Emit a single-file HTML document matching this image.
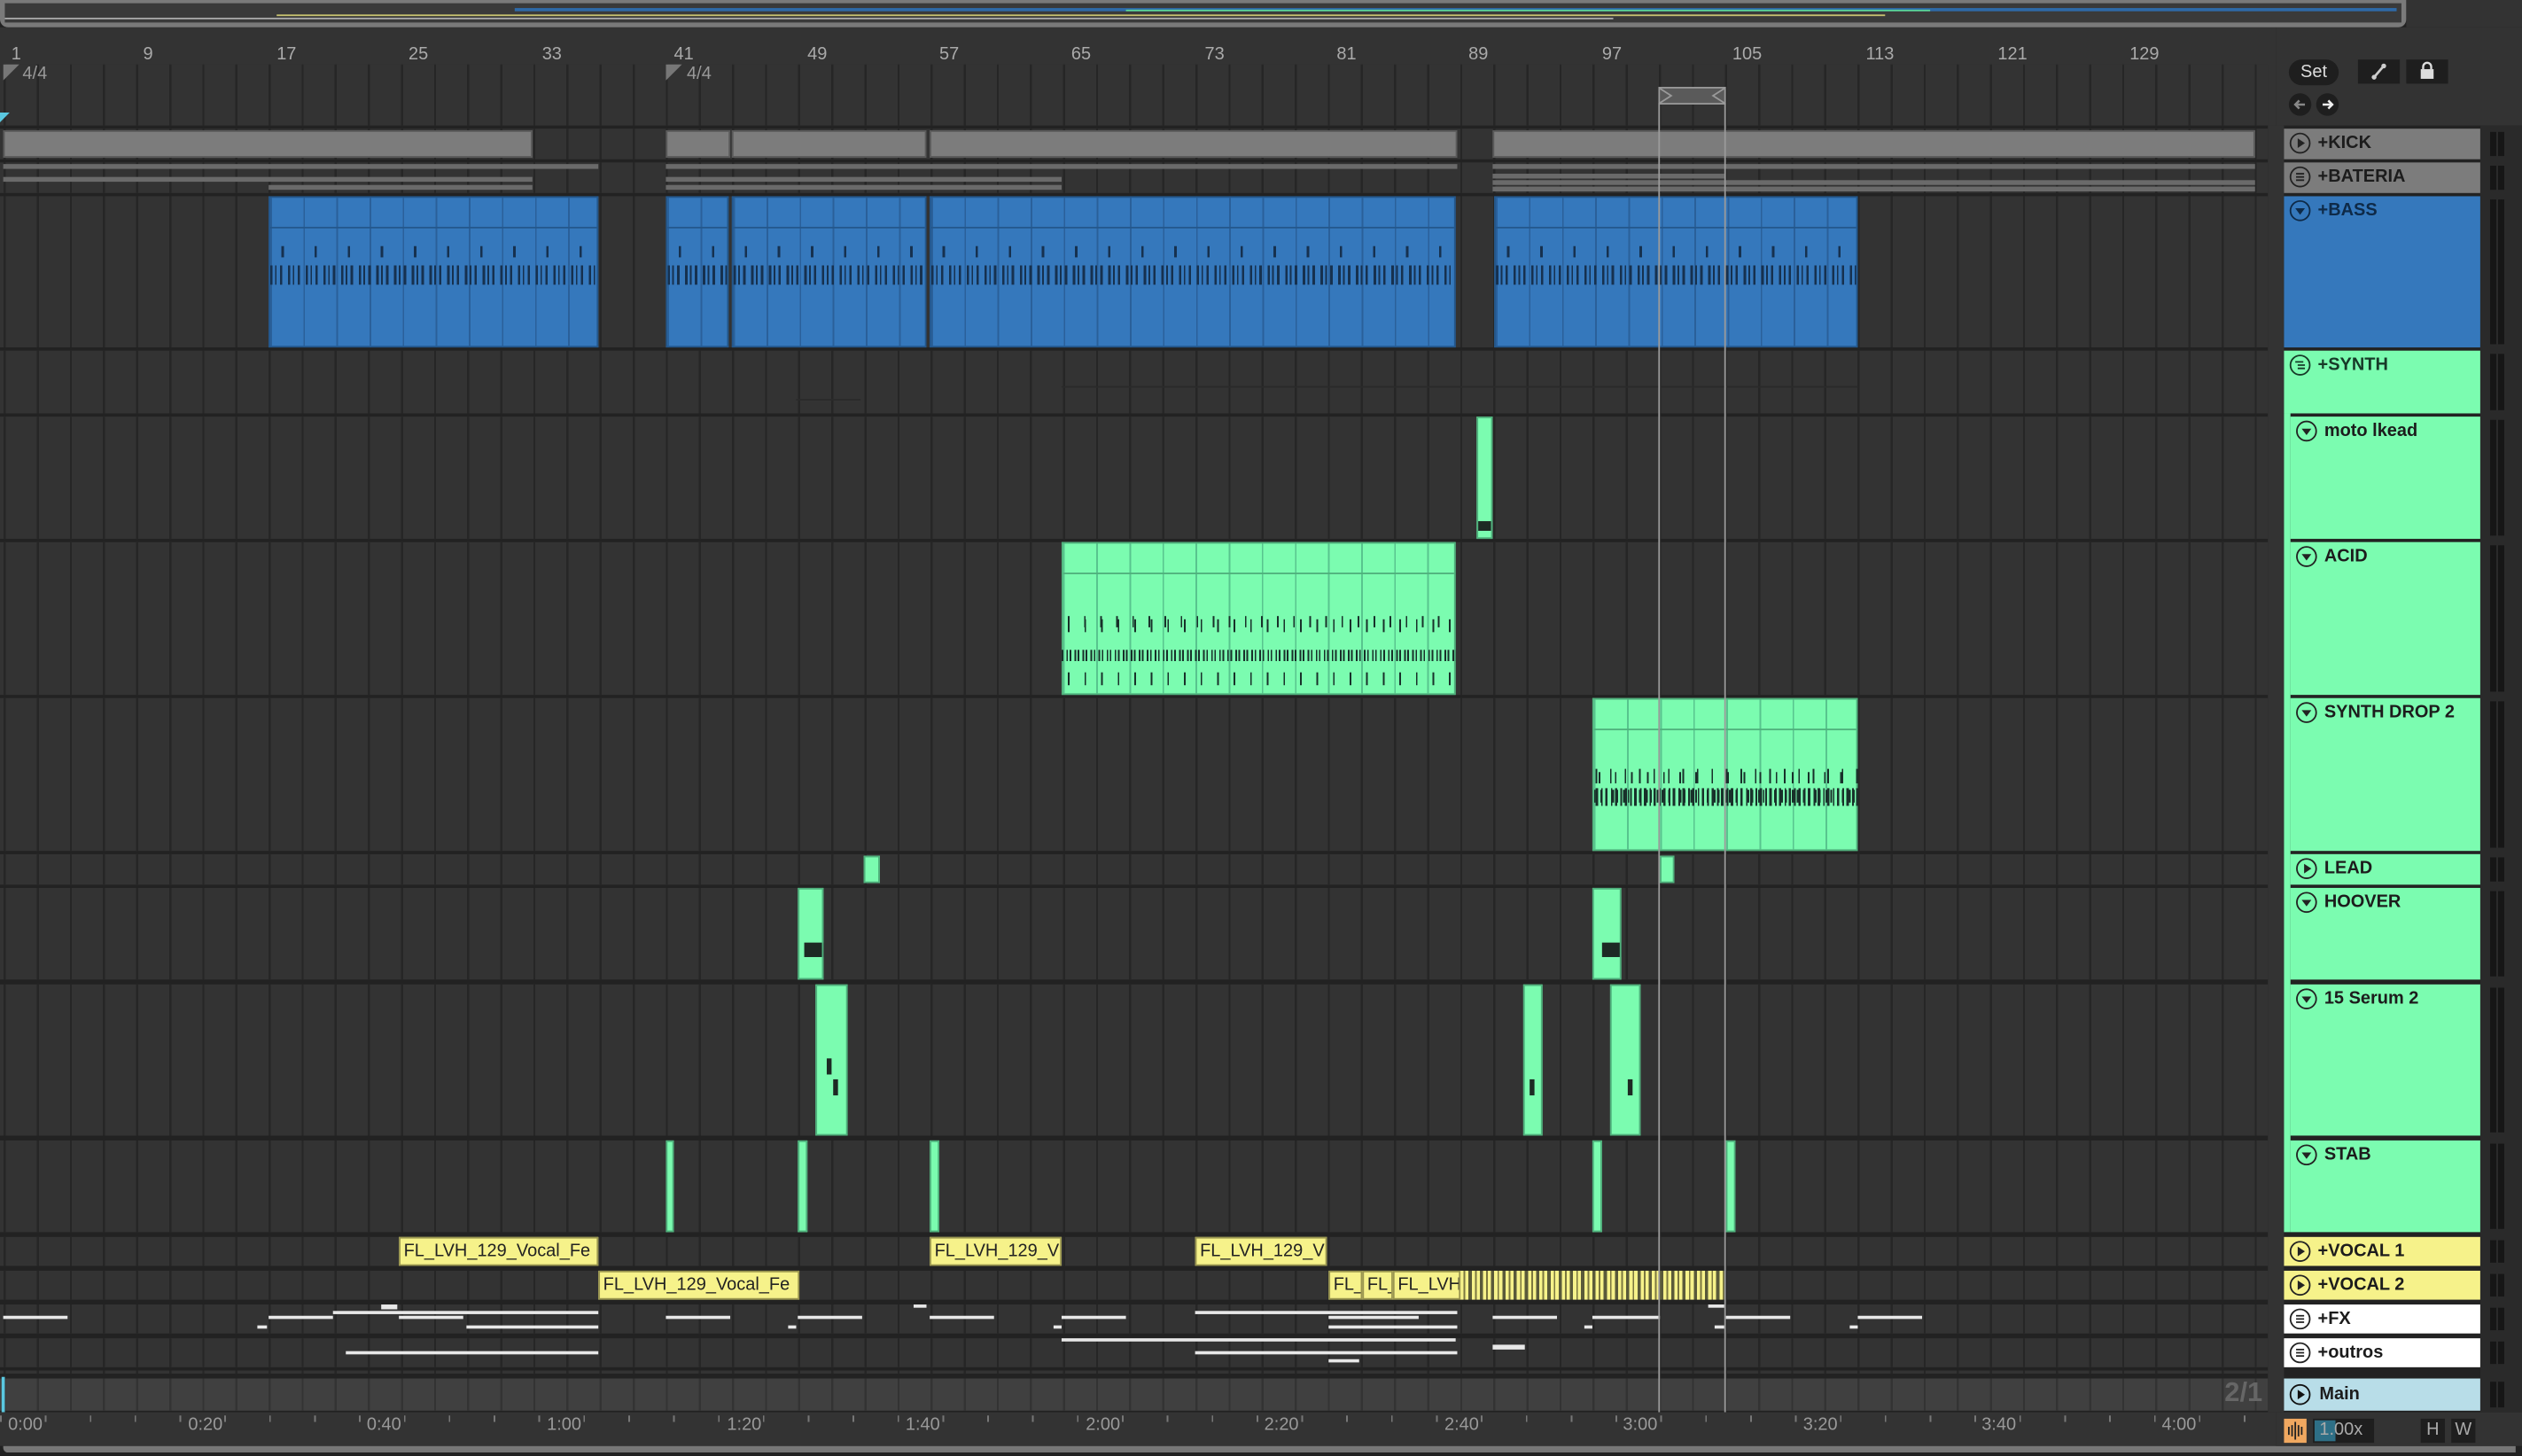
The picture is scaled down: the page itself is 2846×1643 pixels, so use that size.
<!DOCTYPE html>
<html><head><meta charset="utf-8">
<style>
html,body{margin:0;padding:0;background:#1f1f1f;width:2846px;height:1642px;overflow:hidden}
#r{position:absolute;left:0;top:0;width:1568px;height:905px;transform:scale(1.8151);transform-origin:0 0;background:#222;font-family:"Liberation Sans",sans-serif;overflow:hidden}
.a{position:absolute}
.row{position:absolute;left:0;width:1410px;background-color:#333;background-image:repeating-linear-gradient(90deg,transparent 0 2.3px,#262626 2.3px 3.6px,transparent 3.6px 20.58px)}
.hd{position:absolute;left:1420px;width:122px;font-size:11px;font-weight:bold;color:#1c1c1c;box-sizing:border-box;padding-left:21px;line-height:18px}
.hd.ind{left:1424px;width:118px}
.hd svg{position:absolute;left:3px;top:2px}
.mt{position:absolute;left:1548px;width:10px;background:repeating-linear-gradient(90deg,#161616 0 4px,transparent 4px 5px)}
.c{position:absolute;box-sizing:border-box}
.bl{background:#3578bc;border:1px solid #23578c}
.gr{background:#7bfcb0;border:1px solid #4fb07c}
.gy{background:#7c7c7c;border:1px solid #5a5a5a}
.ye{background:#f6f28a;border:1px solid #9a9650;font-size:11px;color:#222;line-height:16px;padding-left:2px;overflow:hidden;white-space:nowrap}
.hl{position:absolute;left:0;right:0;height:1px}
.num{position:absolute;top:28px;font-size:11px;color:#aaa}
.tm{position:absolute;top:880px;font-size:11px;color:#999}
.w{position:absolute;height:2px;background:#e8e8e8}
</style></head><body><div id="r">
<!-- overview -->
<div class="a" style="left:0;top:0;width:1496px;height:17px;background:#7a7a7a;border-radius:0 0 5px 5px"></div>
<div class="a" style="left:3px;top:2px;width:1490px;height:12px;background:#3a3a3a"></div>
<div class="a" style="left:320px;top:5px;width:1170px;height:2px;background:#2e6aa8"></div>
<div class="a" style="left:172px;top:9px;width:1000px;height:1px;background:#c8c270"></div>
<div class="a" style="left:700px;top:6px;width:500px;height:1px;background:#5bd898"></div>
<div class="a" style="left:3px;top:11px;width:1000px;height:1px;background:#aaa"></div>
<div class="a" style="left:1496px;top:0;width:72px;height:17px;background:#333"></div>
<!-- ruler -->
<div class="a" style="left:0;top:17px;width:1415px;height:61px;background:#333"></div>
<div class="row" style="top:40px;height:38px;background-color:#333"></div>
<div class="a" style="left:0;top:40px;width:1410px;height:38px;background:#333;opacity:.0"></div>
<div class="num" style="left:7px">1</div><div class="num" style="left:89px">9</div><div class="num" style="left:172px">17</div><div class="num" style="left:254px">25</div><div class="num" style="left:337px">33</div><div class="num" style="left:419px">41</div><div class="num" style="left:502px">49</div><div class="num" style="left:584px">57</div><div class="num" style="left:666px">65</div><div class="num" style="left:749px">73</div><div class="num" style="left:831px">81</div><div class="num" style="left:913px">89</div><div class="num" style="left:996px">97</div><div class="num" style="left:1077px">105</div><div class="num" style="left:1160px">113</div><div class="num" style="left:1242px">121</div><div class="num" style="left:1324px">129</div>
<div class="a" style="left:14px;top:40px;font-size:11px;color:#999">4/4</div>
<div class="a" style="left:427px;top:40px;font-size:11px;color:#999">4/4</div>
<svg class="a" style="left:2px;top:40px" width="12" height="12"><path d="M0 0H10L0 10Z" fill="#777"/></svg>
<svg class="a" style="left:414px;top:40px" width="12" height="12"><path d="M0 0H10L0 10Z" fill="#777"/></svg>
<svg class="a" style="left:1031px;top:54px" width="43" height="11"><rect x="0.5" y="0.5" width="41" height="10" fill="#5a5a5a" stroke="#999"/><path d="M1 1L8 5.5L1 10M41 1L34 5.5L41 10" fill="none" stroke="#999"/></svg>
<!-- right top panel -->
<div class="a" style="left:1415px;top:17px;width:153px;height:61px;background:#333"></div>
<div class="a" style="left:1423px;top:37px;width:31px;height:16px;border-radius:8px;background:#1e1e1e;color:#ddd;font-size:11px;text-align:center;line-height:16px">Set</div>
<div class="a" style="left:1466px;top:37px;width:26px;height:15px;background:#1e1e1e"><svg width="26" height="15"><path d="M10 11L16 4" stroke="#ccc" stroke-width="1.5"/><circle cx="10" cy="11" r="1.5" fill="#ccc"/><circle cx="16" cy="4" r="1.5" fill="#ccc"/></svg></div>
<div class="a" style="left:1496px;top:37px;width:26px;height:15px;background:#1e1e1e"><svg width="26" height="15"><rect x="9" y="6" width="8" height="6" fill="#ddd"/><path d="M10.5 6V4.5a2.5 2.5 0 0 1 5 0V6" fill="none" stroke="#ddd" stroke-width="1.3"/></svg></div>
<svg class="a" style="left:1422px;top:57px" width="35" height="16"><circle cx="8" cy="8" r="7" fill="#1e1e1e"/><circle cx="25" cy="8" r="7" fill="#1e1e1e"/><path d="M11 8H5M7.5 5.5L5 8L7.5 10.5" stroke="#888" stroke-width="1.4" fill="none"/><path d="M22 8H28M25.5 5.5L28 8L25.5 10.5" stroke="#eee" stroke-width="1.4" fill="none"/></svg>
<!-- track rows -->
<div class="row" style="top:80px;height:19px"></div>
<div class="row" style="top:101px;height:19px"></div>
<div class="row" style="top:122px;height:94px"></div>
<div class="row" style="top:218px;height:39px"></div>
<div class="row" style="top:259px;height:76px"></div>
<div class="row" style="top:337px;height:95px"></div>
<div class="row" style="top:434px;height:95px"></div>
<div class="row" style="top:531px;height:19px"></div>
<div class="row" style="top:552px;height:57px"></div>
<div class="row" style="top:612px;height:94px"></div>
<div class="row" style="top:709px;height:57px"></div>
<div class="row" style="top:769px;height:18px"></div>
<div class="row" style="top:790px;height:18px"></div>
<div class="row" style="top:811px;height:18px"></div>
<div class="row" style="top:832px;height:18px"></div>
<div class="row" style="top:852px;height:2px"></div>
<div class="row" style="top:857px;height:20px;background-color:#404040;background-image:repeating-linear-gradient(90deg,transparent 0 2.3px,#333 2.3px 3.6px,transparent 3.6px 20.58px)"></div>
<div class="a" style="left:1383px;top:856px;font-size:17px;font-weight:bold;color:#666">2/1</div>
<!-- kick clips -->
<div class="c gy" style="left:2px;top:81px;width:329px;height:17px"></div>
<div class="c gy" style="left:414px;top:81px;width:40px;height:17px"></div>
<div class="c gy" style="left:455px;top:81px;width:121px;height:17px"></div>
<div class="c gy" style="left:578px;top:81px;width:328px;height:17px"></div>
<div class="c gy" style="left:928px;top:81px;width:474px;height:17px"></div>
<!-- bateria lines -->
<div class="a" style="left:2px;top:102px;width:370px;height:3px;background:#6a6a6a"></div>
<div class="a" style="left:2px;top:110px;width:329px;height:3px;background:#6a6a6a"></div>
<div class="a" style="left:167px;top:115px;width:164px;height:3px;background:#6a6a6a"></div>
<div class="a" style="left:414px;top:102px;width:492px;height:3px;background:#6a6a6a"></div>
<div class="a" style="left:414px;top:110px;width:246px;height:3px;background:#6a6a6a"></div>
<div class="a" style="left:414px;top:115px;width:246px;height:3px;background:#6a6a6a"></div>
<div class="a" style="left:928px;top:102px;width:474px;height:3px;background:#6a6a6a"></div>
<div class="a" style="left:928px;top:108px;width:144px;height:3px;background:#6a6a6a"></div>
<div class="a" style="left:928px;top:112px;width:474px;height:3px;background:#6a6a6a"></div>
<div class="a" style="left:928px;top:116px;width:474px;height:3px;background:#6a6a6a"></div>
<!-- bass clips -->
<style>.bn{background-image:linear-gradient(#23578c,#23578c),repeating-linear-gradient(90deg,#16314f 0 1.5px,transparent 1.5px 3px,#16314f 3px 4px,transparent 4px 6px,#16314f 6px 7.5px,transparent 7.5px 11px),repeating-linear-gradient(90deg,transparent 0 7px,#16314f 7px 8.5px,transparent 8.5px 20.58px),repeating-linear-gradient(90deg,#2a609a 0 1px,transparent 1px 20.58px);background-size:100% 1px,100% 12px,100% 7px,100% 100%;background-position:0 18px,0 42px,0 30px,0 0;background-repeat:no-repeat}
.gn{background-image:linear-gradient(#4fb07c,#4fb07c),repeating-linear-gradient(90deg,#18302a 0 1px,transparent 1px 4px,#18302a 4px 5.5px,transparent 5.5px 7px),repeating-linear-gradient(90deg,transparent 0 3px,#18302a 3px 4px,transparent 4px 10px),repeating-linear-gradient(90deg,#58c48e 0 1px,transparent 1px 20.58px);background-size:100% 1px,100% 8px,100% 7px,100% 100%;background-repeat:no-repeat}</style>
<div class="c bl bn" style="left:167px;top:122px;width:205px;height:94px"></div>
<div class="c bl bn" style="left:414px;top:122px;width:39px;height:94px"></div>
<div class="c bl bn" style="left:455px;top:122px;width:121px;height:94px"></div>
<div class="c bl bn" style="left:578px;top:122px;width:327px;height:94px"></div>
<div class="c bl bn" style="left:929px;top:122px;width:226px;height:94px"></div>
<!-- synth faint lines -->
<div class="a" style="left:660px;top:240px;width:495px;height:1px;background:#2a2a2a"></div>
<div class="a" style="left:495px;top:248px;width:40px;height:1px;background:#2a2a2a"></div>
<!-- moto -->
<div class="c gr" style="left:918px;top:259px;width:10px;height:76px;background-image:linear-gradient(#1d2a24,#1d2a24);background-size:100% 6px;background-position:0 64px;background-repeat:no-repeat"></div>
<!-- acid -->
<div class="c gr gn" style="left:660px;top:337px;width:245px;height:95px;background-position:0 18px,0 404px,0 45px,0 0"></div>
<div class="a" style="left:660px;top:404px;width:245px;height:7px;background:repeating-linear-gradient(90deg,#18302a 0 1px,transparent 1px 3px,#18302a 3px 4px,transparent 4px 5px)"></div>
<div class="a" style="left:660px;top:385px;width:245px;height:8px;background:repeating-linear-gradient(90deg,transparent 0 4px,#18302a 4px 5px,transparent 5px 10.3px)"></div>
<div class="a" style="left:660px;top:418px;width:245px;height:8px;background:repeating-linear-gradient(90deg,transparent 0 4px,#18302a 4px 5px,transparent 5px 10.3px)"></div>
<!-- synth drop 2 -->
<div class="c gr gn" style="left:990px;top:434px;width:165px;height:95px;background-position:0 18px,0 56px,0 45px,0 0"></div>
<div class="a" style="left:992px;top:490px;width:163px;height:11px;background:repeating-linear-gradient(90deg,#18302a 0 1.5px,transparent 1.5px 3.5px,#18302a 3.5px 4.5px,transparent 4.5px 6px)"></div>
<div class="a" style="left:992px;top:478px;width:163px;height:9px;background:repeating-linear-gradient(90deg,#18302a 0 1px,transparent 1px 9px)"></div>
<!-- lead -->
<div class="c gr" style="left:537px;top:532px;width:10px;height:17px"></div>
<div class="c gr" style="left:1032px;top:532px;width:9px;height:17px"></div>
<!-- hoover -->
<div class="c gr" style="left:496px;top:552px;width:16px;height:57px;background-image:linear-gradient(#1d2a24,#1d2a24);background-size:12px 9px;background-position:3px 33px;background-repeat:no-repeat"></div>
<div class="c gr" style="left:990px;top:552px;width:18px;height:57px;background-image:linear-gradient(#1d2a24,#1d2a24);background-size:12px 9px;background-position:5px 33px;background-repeat:no-repeat"></div>
<!-- serum -->
<div class="c gr" style="left:507px;top:612px;width:20px;height:94px;background-image:linear-gradient(#1d2a24,#1d2a24),linear-gradient(#1d2a24,#1d2a24);background-size:3px 10px,3px 10px;background-position:6px 45px,10px 58px;background-repeat:no-repeat"></div>
<div class="c gr" style="left:947px;top:612px;width:12px;height:94px;background-image:linear-gradient(#1d2a24,#1d2a24);background-size:3px 10px;background-position:3px 58px;background-repeat:no-repeat"></div>
<div class="c gr" style="left:1001px;top:612px;width:19px;height:94px;background-image:linear-gradient(#1d2a24,#1d2a24);background-size:3px 10px;background-position:10px 58px;background-repeat:no-repeat"></div>
<!-- stab -->
<div class="c gr" style="left:414px;top:709px;width:5px;height:57px"></div>
<div class="c gr" style="left:496px;top:709px;width:6px;height:57px"></div>
<div class="c gr" style="left:578px;top:709px;width:6px;height:57px"></div>
<div class="c gr" style="left:990px;top:709px;width:6px;height:57px"></div>
<div class="c gr" style="left:1073px;top:709px;width:6px;height:57px"></div>
<!-- vocals -->
<div class="c ye" style="left:248px;top:769px;width:124px;height:18px">FL_LVH_129_Vocal_Fe</div>
<div class="c ye" style="left:578px;top:769px;width:82px;height:18px">FL_LVH_129_V</div>
<div class="c ye" style="left:743px;top:769px;width:82px;height:18px">FL_LVH_129_V</div>
<div class="c ye" style="left:372px;top:790px;width:125px;height:18px">FL_LVH_129_Vocal_Fe</div>
<div class="c ye" style="left:826px;top:790px;width:21px;height:18px">FL_</div>
<div class="c ye" style="left:847px;top:790px;width:19px;height:18px">FL_</div>
<div class="c ye" style="left:866px;top:790px;width:42px;height:18px">FL_LVH</div>
<div class="a" style="left:908px;top:790px;width:164px;height:18px;background:repeating-linear-gradient(90deg,#f6f28a 0 2px,#7a7640 2px 3px,#f6f28a 3px 5px,#5a5a3a 5px 7px)"></div>
<!-- fx / outros white lines -->
<div class="w" style="left:2px;top:818px;width:40px"></div>
<div class="w" style="left:167px;top:818px;width:40px"></div>
<div class="w" style="left:207px;top:815px;width:165px"></div>
<div class="w" style="left:237px;top:811px;width:10px;height:3px"></div>
<div class="w" style="left:248px;top:818px;width:40px"></div>
<div class="w" style="left:290px;top:824px;width:82px"></div>
<div class="w" style="left:160px;top:824px;width:6px"></div>
<div class="w" style="left:414px;top:818px;width:40px"></div>
<div class="w" style="left:496px;top:818px;width:40px"></div>
<div class="w" style="left:490px;top:824px;width:5px"></div>
<div class="w" style="left:578px;top:818px;width:40px"></div>
<div class="w" style="left:568px;top:811px;width:8px"></div>
<div class="w" style="left:743px;top:815px;width:163px"></div>
<div class="w" style="left:826px;top:818px;width:56px"></div>
<div class="w" style="left:826px;top:824px;width:80px"></div>
<div class="w" style="left:660px;top:818px;width:40px"></div>
<div class="w" style="left:655px;top:824px;width:5px"></div>
<div class="w" style="left:928px;top:818px;width:40px"></div>
<div class="w" style="left:990px;top:818px;width:42px"></div>
<div class="w" style="left:985px;top:824px;width:5px"></div>
<div class="w" style="left:1062px;top:811px;width:10px"></div>
<div class="w" style="left:1066px;top:824px;width:6px"></div>
<div class="w" style="left:1073px;top:818px;width:40px"></div>
<div class="w" style="left:1155px;top:818px;width:40px"></div>
<div class="w" style="left:1150px;top:824px;width:5px"></div>
<div class="w" style="left:660px;top:832px;width:245px"></div>
<div class="w" style="left:215px;top:840px;width:157px"></div>
<div class="w" style="left:743px;top:840px;width:163px"></div>
<div class="w" style="left:826px;top:845px;width:19px"></div>
<div class="w" style="left:928px;top:836px;width:20px;height:3px"></div>
<!-- loop/playhead lines -->
<div class="a" style="left:1031px;top:64px;width:1px;height:814px;background:#9a9a9a"></div>
<div class="a" style="left:1072px;top:64px;width:1px;height:814px;background:#9a9a9a"></div>
<div class="a" style="left:1px;top:856px;width:2px;height:22px;background:#5ac8e0"></div>
<svg class="a" style="left:0;top:70px" width="8" height="8"><path d="M0 0H6L0 6Z" fill="#5ac8e0"/></svg>
<!-- time ruler -->
<div class="a" style="left:0;top:878px;width:1415px;height:21px;background:#333"></div>
<div class="a" style="left:0;top:880px;width:1400px;height:4px;background:repeating-linear-gradient(90deg,#777 0 1px,transparent 1px 27.9px)"></div>
<div class="tm" style="left:5px">0:00</div><div class="tm" style="left:117px">0:20</div><div class="tm" style="left:228px">0:40</div><div class="tm" style="left:340px">1:00</div><div class="tm" style="left:452px">1:20</div><div class="tm" style="left:563px">1:40</div><div class="tm" style="left:675px">2:00</div><div class="tm" style="left:786px">2:20</div><div class="tm" style="left:898px">2:40</div><div class="tm" style="left:1009px">3:00</div><div class="tm" style="left:1121px">3:20</div><div class="tm" style="left:1232px">3:40</div><div class="tm" style="left:1344px">4:00</div>
<div class="a" style="left:0;top:899px;width:1568px;height:6px;background:#222"></div>
<div class="a" style="left:2px;top:899px;width:1562px;height:4px;background:#777;border-radius:0 0 0 3px"></div>
<!-- right side panel bg -->
<div class="a" style="left:1415px;top:878px;width:153px;height:21px;background:#333"></div>
<div class="a" style="left:1420px;top:882px;width:14px;height:15px;background:#f0a860"><svg width="14" height="15"><path d="M3 5V10M5 4V11M7 2V13M9 4V11M11 5V10" stroke="#222" stroke-width="1"/></svg></div>
<div class="a" style="left:1438px;top:882px;width:38px;height:15px;background:#1e1e1e;color:#aaa;font-size:11px;line-height:15px"><div class="a" style="left:1px;top:1px;width:13px;height:13px;background:#2e6f86"></div><span class="a" style="left:4px">1.00x</span></div>
<div class="a" style="left:1505px;top:882px;width:15px;height:15px;background:#1e1e1e;color:#aaa;font-size:11px;line-height:15px;text-align:center">H</div>
<div class="a" style="left:1524px;top:882px;width:15px;height:15px;background:#1e1e1e;color:#aaa;font-size:11px;line-height:15px;text-align:center">W</div>
<!-- headers -->
<div class="a" style="left:1410px;top:78px;width:10px;height:800px;background:#333"></div>
<div class="a" style="left:1542px;top:78px;width:26px;height:800px;background:#2a2a2a"></div>
<div class="hd" style="top:80px;height:19px;background:#7c7c7c"><svg width="14" height="14"><circle cx="7" cy="7" r="6" fill="none" stroke="#222" stroke-width="1"/><path d="M5.5 4V10L10 7Z" fill="#222"/></svg>+KICK</div>
<div class="hd" style="top:101px;height:19px;background:#7c7c7c"><svg width="14" height="14"><circle cx="7" cy="7" r="6" fill="none" stroke="#222"/><path d="M4.5 5H9.5M4.5 7H9.5M4.5 9H9.5" stroke="#222"/></svg>+BATERIA</div>
<div class="hd" style="top:122px;height:94px;background:#3578bc;color:#0e2a48"><svg width="14" height="14"><circle cx="7" cy="7" r="6" fill="none" stroke="#0e2a48"/><path d="M4 5.5H10L7 9.5Z" fill="#0e2a48"/></svg>+BASS</div>
<div class="hd" style="top:218px;height:39px;background:#7bfcb0;color:#173a28"><svg width="14" height="14"><circle cx="7" cy="7" r="6" fill="none" stroke="#173a28"/><path d="M4 5H9M5.5 7H10M5.5 9H10" stroke="#173a28"/></svg>+SYNTH</div>
<div class="a" style="left:1420px;top:257px;width:4px;height:509px;background:#7bfcb0"></div>
<div class="hd ind" style="top:259px;height:76px;background:#7bfcb0"><svg width="14" height="14"><circle cx="7" cy="7" r="6" fill="none" stroke="#222"/><path d="M4 5.5H10L7 9.5Z" fill="#222"/></svg>moto lkead</div>
<div class="hd ind" style="top:337px;height:95px;background:#7bfcb0"><svg width="14" height="14"><circle cx="7" cy="7" r="6" fill="none" stroke="#222"/><path d="M4 5.5H10L7 9.5Z" fill="#222"/></svg>ACID</div>
<div class="hd ind" style="top:434px;height:95px;background:#7bfcb0"><svg width="14" height="14"><circle cx="7" cy="7" r="6" fill="none" stroke="#222"/><path d="M4 5.5H10L7 9.5Z" fill="#222"/></svg>SYNTH DROP 2</div>
<div class="hd ind" style="top:531px;height:19px;background:#7bfcb0"><svg width="14" height="14"><circle cx="7" cy="7" r="6" fill="none" stroke="#222"/><path d="M5.5 4V10L10 7Z" fill="#222"/></svg>LEAD</div>
<div class="hd ind" style="top:552px;height:57px;background:#7bfcb0"><svg width="14" height="14"><circle cx="7" cy="7" r="6" fill="none" stroke="#222"/><path d="M4 5.5H10L7 9.5Z" fill="#222"/></svg>HOOVER</div>
<div class="hd ind" style="top:612px;height:94px;background:#7bfcb0"><svg width="14" height="14"><circle cx="7" cy="7" r="6" fill="none" stroke="#222"/><path d="M4 5.5H10L7 9.5Z" fill="#222"/></svg>15 Serum 2</div>
<div class="hd ind" style="top:709px;height:57px;background:#7bfcb0"><svg width="14" height="14"><circle cx="7" cy="7" r="6" fill="none" stroke="#222"/><path d="M4 5.5H10L7 9.5Z" fill="#222"/></svg>STAB</div>
<div class="hd" style="top:769px;height:18px;background:#f6f28a"><svg width="14" height="14"><circle cx="7" cy="7" r="6" fill="none" stroke="#222"/><path d="M5.5 4V10L10 7Z" fill="#222"/></svg>+VOCAL 1</div>
<div class="hd" style="top:790px;height:18px;background:#f6f28a"><svg width="14" height="14"><circle cx="7" cy="7" r="6" fill="none" stroke="#222"/><path d="M5.5 4V10L10 7Z" fill="#222"/></svg>+VOCAL 2</div>
<div class="hd" style="top:811px;height:18px;background:#fff"><svg width="14" height="14"><circle cx="7" cy="7" r="6" fill="none" stroke="#222"/><path d="M4.5 5H9.5M4.5 7H9.5M4.5 9H9.5" stroke="#222"/></svg>+FX</div>
<div class="hd" style="top:832px;height:18px;background:#fff"><svg width="14" height="14"><circle cx="7" cy="7" r="6" fill="none" stroke="#222"/><path d="M4.5 5H9.5M4.5 7H9.5M4.5 9H9.5" stroke="#222"/></svg>+outros</div>
<div class="hd" style="top:857px;height:20px;background:#b8dde8;line-height:20px;padding-left:22px"><svg width="14" height="14" style="top:3px"><circle cx="7" cy="7" r="6" fill="none" stroke="#111"/><path d="M5.5 4V10L10 7Z" fill="#111"/></svg>Main</div>
<!-- meters -->
<div class="mt" style="top:82px;height:15px"></div>
<div class="mt" style="top:103px;height:15px"></div>
<div class="mt" style="top:124px;height:90px"></div>
<div class="mt" style="top:220px;height:35px"></div>
<div class="mt" style="top:261px;height:72px"></div>
<div class="mt" style="top:339px;height:91px"></div>
<div class="mt" style="top:436px;height:91px"></div>
<div class="mt" style="top:533px;height:15px"></div>
<div class="mt" style="top:554px;height:53px"></div>
<div class="mt" style="top:614px;height:90px"></div>
<div class="mt" style="top:711px;height:53px"></div>
<div class="mt" style="top:771px;height:14px"></div>
<div class="mt" style="top:792px;height:14px"></div>
<div class="mt" style="top:813px;height:14px"></div>
<div class="mt" style="top:834px;height:14px"></div>
<div class="mt" style="top:859px;height:16px"></div>
</div></body></html>
